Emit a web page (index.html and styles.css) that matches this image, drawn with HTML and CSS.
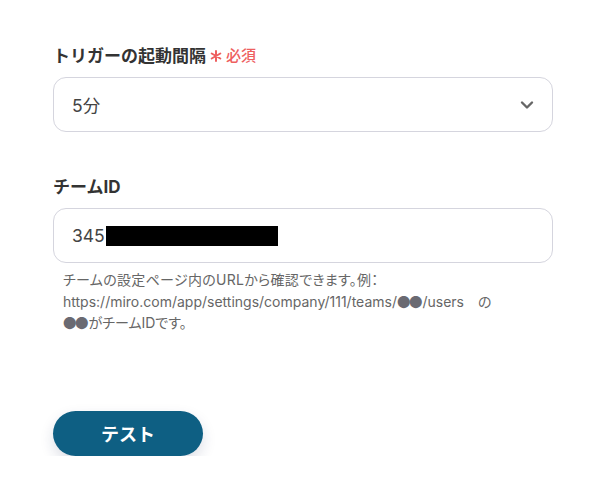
FILE: index.html
```html
<!DOCTYPE html>
<html lang="ja">
<head>
    <meta charset="UTF-8">
    <meta name="viewport" content="width=device-width, initial-scale=1.0">
    <title>トリガー設定</title>
    <link rel="stylesheet" href="styles.css">
</head>
<body>
    <div class="container">
        <div class="field">
            <label class="field-label">トリガーの起動間隔<span class="required">
                <svg class="star" width="12" height="12" viewBox="0 0 12 12">
                    <path d="M6 1 V11 M1.7 3.5 L10.3 8.5 M1.7 8.5 L10.3 3.5" stroke="#ee5f5f" stroke-width="2" stroke-linecap="round"/>
                </svg>必須</span></label>
            <div class="select-box">
                <span class="select-value">5分</span>
                <svg class="chevron" width="14" height="10" viewBox="0 0 14 10">
                    <path d="M2 2.5 L7 7.5 L12 2.5" fill="none" stroke="#666" stroke-width="2.4" stroke-linecap="round" stroke-linejoin="round"/>
                </svg>
            </div>
        </div>

        <div class="field">
            <label class="field-label">チームID</label>
            <div class="text-box">
                <span class="input-value">345</span><span class="masked"></span>
            </div>
            <p class="help"><span class="help-first">チームの設定ページ内のURLから確認できます。例：</span><br>https://miro.com/app/settings/company/111/teams/<span class="dots">●●</span>/users　の<br><span class="dots">●●</span>がチームIDです。</p>
        </div>

        <button class="test-button">テスト</button>
    </div>
</body>
</html>
```

FILE: styles.css
```css
body {
    font-family: Inter, "Noto Sans CJK JP", sans-serif;
    margin: 0;
    background-color: #fff;
    color: #333;
}

.container {
    width: 500px;
    padding: 42px 0 0 53px;
}

.field {
    margin-bottom: 41px;
}

.field-label {
    display: flex;
    align-items: center;
    font-size: 17px;
    font-weight: bold;
    color: #333;
    height: 24px;
    margin-bottom: 11px;
}

.required {
    display: inline-flex;
    align-items: center;
    color: #ee5f5f;
    font-size: 15px;
    font-weight: 500;
    margin-left: 4px;
}

.star {
    margin: 3px 4px 0 0;
}

.select-box, .text-box {
    box-sizing: border-box;
    height: 55px;
    border: 1px solid #d5d5de;
    border-radius: 13px;
    display: flex;
    align-items: center;
    padding: 0 18px;
    font-size: 17.5px;
    color: #444;
}

.select-box {
    justify-content: space-between;
}

.masked {
    display: inline-block;
    width: 172px;
    height: 20px;
    background: #000;
    margin-left: 1px;
}

.help {
    margin: 6px 0 0 10px;
    font-size: 14px;
    line-height: 21.5px;
    color: #666;
    font-feature-settings: "palt";
}

.help-first {
    letter-spacing: 0.3px;
}

.dots {
    font-family: "Noto Sans CJK JP", sans-serif;
    font-size: 13.5px;
    line-height: 1;
    letter-spacing: -1.5px;
    margin-right: 1.5px;
    color: #6a6a72;
}

.test-button {
    margin-top: 36px;
    width: 150px;
    height: 45px;
    border: none;
    border-radius: 23px;
    background-color: #0e5f83;
    color: #fff;
    font-family: "Noto Sans CJK JP", sans-serif;
    font-size: 18px;
    font-weight: bold;
    box-shadow: 0 6px 14px rgba(30, 40, 90, 0.15);
    cursor: pointer;
}
```
